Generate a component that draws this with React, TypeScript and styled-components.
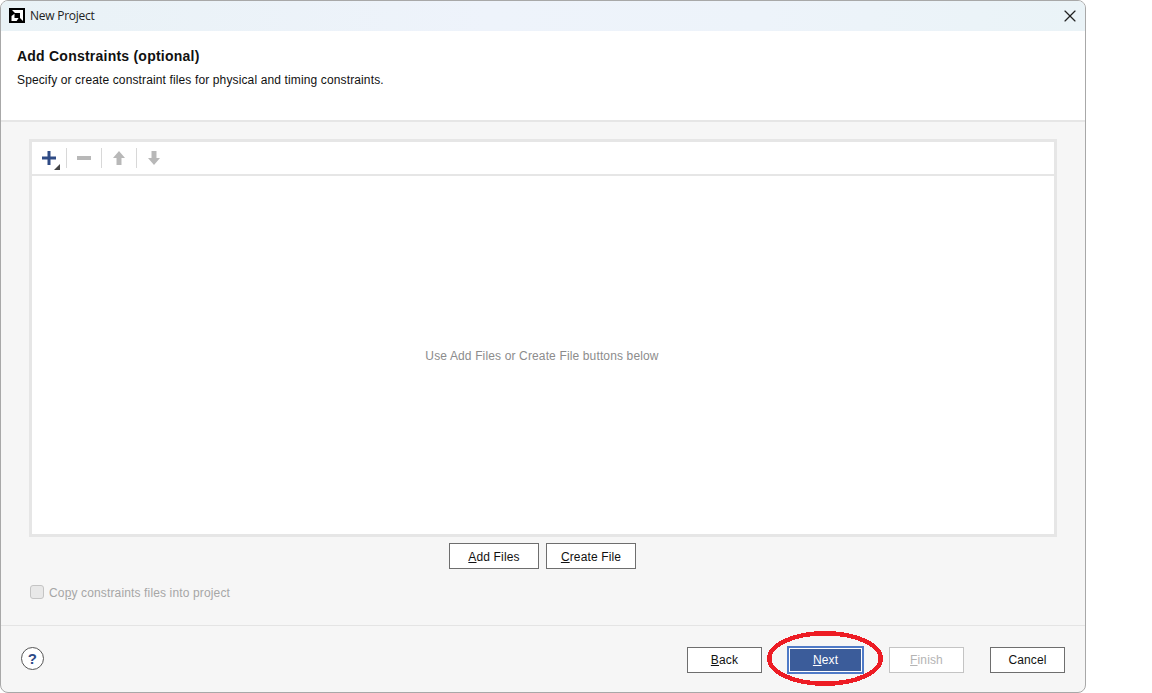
import styled, { createGlobalStyle } from 'styled-components'
import { X } from 'lucide-react'

const GlobalStyle = createGlobalStyle`
  html, body {
    margin: 0;
    padding: 0;
    background: #fff;
    overflow: hidden;
  }
  #root {
    width: 1152px;
    height: 693px;
  }
`

const Screen = styled.div`
  position: relative;
  width: 1152px;
  height: 693px;
  font-family: "Liberation Sans", Arial, sans-serif;
  font-size: 12px;
  letter-spacing: 0.14px;
  color: #111;
`

const Window = styled.div`
  box-sizing: border-box;
  width: 1086px;
  height: 693px;
  display: flex;
  flex-direction: column;
  border: 1px solid #a8a8a8;
  border-radius: 8px;
  overflow: hidden;
  background: #f6f6f6;
`

const TitleBar = styled.div`
  height: 30px;
  flex: none;
  display: flex;
  align-items: center;
  padding: 0 5px 1px 8px;
  box-sizing: border-box;
  gap: 5px;
  background: linear-gradient(90deg, #e9f2f6 0%, #eef3fb 45%, #edf3fa 70%, #eaf3f7 100%);
`

const TitleText = styled.span`
  flex: 1;
  font-family: "Open Sans", sans-serif;
  font-size: 12px;
  color: #222;
  letter-spacing: -0.25px;
`

const CloseButton = styled.button`
  width: 20px;
  height: 20px;
  padding: 0;
  border: 0;
  background: none;
  display: flex;
  align-items: center;
  justify-content: center;
  color: #222;
`

const Header = styled.header`
  box-sizing: border-box;
  height: 91px;
  flex: none;
  padding: 17px 16px 0;
  background: #fff;
  border-bottom: 2px solid #e6e6e6;
`

const Heading = styled.h1`
  margin: 0 0 7px;
  font-size: 14px;
  line-height: 17px;
  font-weight: 700;
  letter-spacing: 0.23px;
  color: #111;
`

const Subheading = styled.p`
  margin: 0;
  font-size: 12px;
  line-height: 16px;
  letter-spacing: 0.13px;
  color: #111;
`

const Body = styled.main`
  flex: 1;
  min-height: 0;
  display: flex;
  flex-direction: column;
  padding: 17px 28px 0 28px;
`

const FilePanel = styled.section`
  box-sizing: border-box;
  height: 398px;
  flex: none;
  display: flex;
  flex-direction: column;
  border: 3px solid #e6e6e6;
  background: #fff;
`

const Toolbar = styled.div`
  box-sizing: border-box;
  height: 34px;
  flex: none;
  display: flex;
  align-items: center;
  padding: 0 0 0 2px;
  border-bottom: 2px solid #e6e6e6;
`

const ToolButton = styled.span`
  position: relative;
  width: 30px;
  height: 30px;
  display: flex;
  align-items: center;
  justify-content: center;
`

const ToolDivider = styled.span`
  width: 1px;
  height: 20px;
  margin: 0 2px;
  background: #d8d8d8;
`

const MenuCorner = styled.span`
  position: absolute;
  right: 4px;
  bottom: 3px;
  width: 0;
  height: 0;
  border-style: solid;
  border-width: 0 0 6px 6px;
  border-color: transparent transparent #444 transparent;
`

const EmptyMessage = styled.div`
  flex: 1;
  display: flex;
  align-items: center;
  justify-content: center;
  padding: 2px 2px 0 0;
  color: #8c8c8c;
  font-size: 12px;
`

const PanelActions = styled.div`
  display: flex;
  justify-content: center;
  gap: 7px;
  margin-top: 6px;
  padding-right: 1px;
`

const Button = styled.button<{ $disabled?: boolean }>`
  box-sizing: border-box;
  width: 75px;
  height: 26px;
  padding: 0;
  font-family: inherit;
  font-size: 12px;
  letter-spacing: inherit;
  color: ${({ $disabled }) => ($disabled ? '#b4b4b4' : '#111')};
  background: #fff;
  border: 1px solid ${({ $disabled }) => ($disabled ? '#c4c4c4' : '#6e6e6e')};
`

const PrimaryButton = styled(Button)`
  width: 77px;
  height: 28px;
  color: #fff;
  background: #3b5c9a;
  border: 2px solid #4f7ac7;
  box-shadow: inset 0 0 0 1px #fff;
`

const PanelButton = styled(Button)`
  width: 90px;
  padding-top: 2px;
`

const Mnemonic = styled.span`
  text-decoration: underline;
`

const CheckRow = styled.label`
  display: flex;
  align-items: center;
  gap: 5px;
  margin-top: 15px;
  margin-left: 1px;
  color: #a6a6a6;
  font-size: 12px;
`

const CheckLabel = styled.span`
  padding-top: 2px;
`

const CheckBox = styled.span`
  box-sizing: border-box;
  width: 14px;
  height: 14px;
  border: 1px solid #c4c4c4;
  border-radius: 3px;
  background: #e8e8e8;
`

const Footer = styled.footer`
  box-sizing: border-box;
  height: 67px;
  flex: none;
  display: flex;
  align-items: center;
  padding: 0 20px;
  border-top: 1px solid #e4e4e4;
`

const HelpButton = styled.span`
  box-sizing: border-box;
  width: 23px;
  height: 23px;
  margin-top: -2px;
  border: 1px solid #555;
  border-radius: 50%;
  background: #fff;
  display: flex;
  align-items: center;
  justify-content: center;
  color: #2d4a86;
  font-size: 15px;
  font-weight: 700;
`

const FooterActions = styled.div`
  margin-left: auto;
  display: flex;
  align-items: center;
  margin-top: 1px;
`

const NavGroup = styled.div`
  display: flex;
  align-items: center;
  gap: 25px;
  margin-right: 26px;
`

const Annotation = styled.svg`
  position: absolute;
  left: 764px;
  top: 628px;
  pointer-events: none;
`

const ToolIcon = styled.svg`
  display: block;
`

const AmdLogo = () => (
  <ToolIcon width="16" height="15" viewBox="0 0 16 15">
    <rect width="16" height="15" fill="#000" />
    <path d="M3 2h11v11l-3-3V5H6z" fill="#fff" />
    <path d="M2.5 13V8l3-2.2V10H9.6L7.6 13z" fill="#fff" />
  </ToolIcon>
)

const App = () => (
  <>
    <GlobalStyle />
    <Screen>
      <Window>
        <TitleBar>
          <AmdLogo />
          <TitleText>New Project</TitleText>
          <CloseButton aria-label="Close">
            <X size={20} strokeWidth={1.4} />
          </CloseButton>
        </TitleBar>
        <Header>
          <Heading>Add Constraints (optional)</Heading>
          <Subheading>Specify or create constraint files for physical and timing constraints.</Subheading>
        </Header>
        <Body>
          <FilePanel>
            <Toolbar>
              <ToolButton>
                <ToolIcon width="16" height="16" viewBox="0 0 16 16">
                  <path d="M1 8h14M8 1v14" stroke="#2f4b85" strokeWidth="3" fill="none" />
                </ToolIcon>
                <MenuCorner />
              </ToolButton>
              <ToolDivider />
              <ToolButton>
                <ToolIcon width="16" height="16" viewBox="0 0 16 16">
                  <path d="M1 8h14" stroke="#b8b8b8" strokeWidth="4" fill="none" />
                </ToolIcon>
              </ToolButton>
              <ToolDivider />
              <ToolButton>
                <ToolIcon width="14" height="16" viewBox="0 0 14 16">
                  <path d="M7 1l6 7H9.5v7h-5V8H1z" fill="#b8b8b8" />
                </ToolIcon>
              </ToolButton>
              <ToolDivider />
              <ToolButton>
                <ToolIcon width="14" height="16" viewBox="0 0 14 16">
                  <path d="M7 15l6-7H9.5V1h-5v7H1z" fill="#b8b8b8" />
                </ToolIcon>
              </ToolButton>
            </Toolbar>
            <EmptyMessage>Use Add Files or Create File buttons below</EmptyMessage>
          </FilePanel>
          <PanelActions>
            <PanelButton><Mnemonic>A</Mnemonic>dd Files</PanelButton>
            <PanelButton><Mnemonic>C</Mnemonic>reate File</PanelButton>
          </PanelActions>
          <CheckRow>
            <CheckBox />
            <CheckLabel>Co<Mnemonic>p</Mnemonic>y constraints files into project</CheckLabel>
          </CheckRow>
        </Body>
        <Footer>
          <HelpButton>?</HelpButton>
          <FooterActions>
            <NavGroup>
              <Button><Mnemonic>B</Mnemonic>ack</Button>
              <PrimaryButton><Mnemonic>N</Mnemonic>ext</PrimaryButton>
              <Button $disabled><Mnemonic>F</Mnemonic>inish</Button>
            </NavGroup>
            <Button>Cancel</Button>
          </FooterActions>
        </Footer>
      </Window>
      <Annotation width="124" height="62" viewBox="0 0 124 62" shapeRendering="crispEdges">
        <ellipse cx="61" cy="30.5" rx="55.7" ry="25.2" fill="none" stroke="#ed1c24" strokeWidth="4.5" />
      </Annotation>
    </Screen>
  </>
)

export default App
